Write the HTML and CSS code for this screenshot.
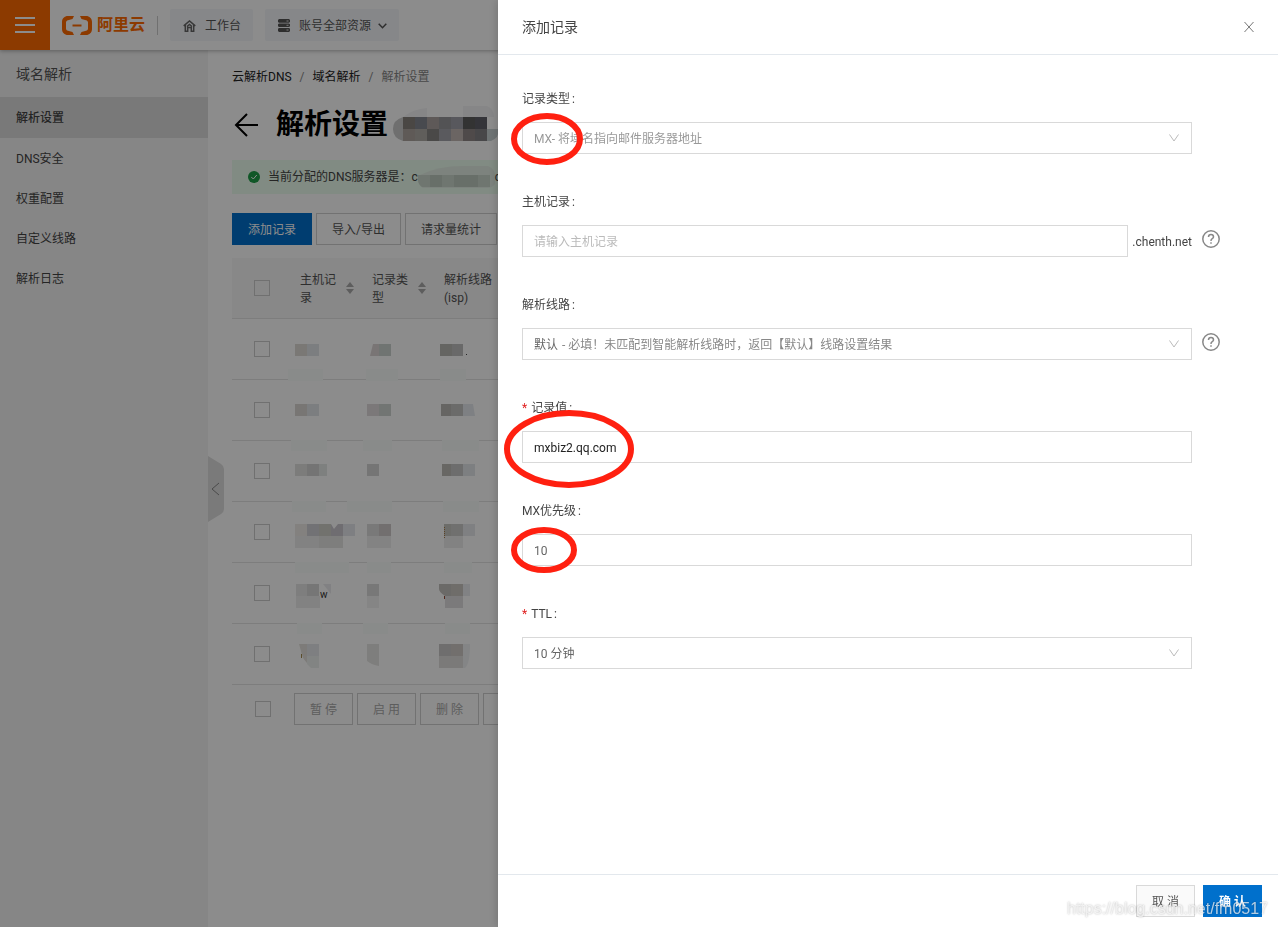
FILE: index.html
```html
<!DOCTYPE html>
<html lang="zh-CN">
<head>
  <meta charset="UTF-8">
  <meta name="viewport" content="width=device-width, initial-scale=1.0">
  <title>云解析DNS - 解析设置</title>
  <link rel="stylesheet" href="styles.css">
</head>
<body>
  <header class="topbar">
    <button class="menu-button" aria-label="菜单">
      <svg width="20" height="16" viewBox="0 0 20 16" stroke="#fff" stroke-width="2"><path d="M0 1H20M0 8H20M0 15H20"/></svg>
    </button>
    <a class="logo" href="#">
      <svg width="30" height="19" viewBox="0 0 30 19" fill="#ff6a00">
        <path d="M12 0H6C2.500 0 0 2.500 0 6v7c0 3.500 2.500 6 6 6h6l-1.500-3-4.500-1.200C4.700 14.400 4 13.600 4 12.500v-6C4 5.400 4.700 4.600 6 4.200L10.500 3z"/>
        <path d="M18 0h6c3.500 0 6 2.500 6 6v7c0 3.500-2.500 6-6 6h-6l1.500-3 4.500-1.200c1.300-.4 2-1.200 2-2.300v-6c0-1.100-.7-1.900-2-2.300L19.500 3z"/>
        <path d="M10.500 8.500h9v2h-9z"/>
      </svg>
      <span>阿里云</span>
    </a>
    <button class="top-button">
      <svg width="13" height="12" viewBox="0 0 13 12" fill="none" stroke="#666" stroke-width="1.500"><path d="M.7 5.800L6.500 1l5.800 4.800M2.300 5v6.200h2.400V7.500h3.600v3.700h2.400V5M4 6.500L6.500 4.400 9 6.500"/></svg>
      工作台
    </button>
    <button class="top-button">
      <svg width="12" height="13" viewBox="0 0 12 13"><path fill="#555" d="M1 0h10l1 1v2l-1 .7H1L0 3V1zM1 4.500h10l1 .7v2l-1 .8H1l-1-.8v-2zM1 9h10l1 .8V12l-1 1H1l-1-1V9.800z"/><path stroke="#ddd" d="M8.500 2h2M8.500 6.300h2M8.500 11h2"/></svg>
      <span>账号全部资源</span>
      <svg class="arrow" width="9" height="6" viewBox="0 0 9 6" fill="none" stroke="#555" stroke-width="1.500"><path d="M.7.7l3.800 4L8.300.7"/></svg>
    </button>
  </header>

  <div class="layout">
    <nav class="sidebar">
      <div class="sidebar-title">域名解析</div>
      <a class="active" href="#">解析设置</a>
      <a href="#">DNS安全</a>
      <a href="#">权重配置</a>
      <a href="#">自定义线路</a>
      <a href="#">解析日志</a>
      <button class="collapse" aria-label="收起">
        <svg width="16" height="66" viewBox="0 0 16 66"><path fill="#dedede" d="M0 0l13 8q3 2 3 5v40q0 3-3 5L0 66z"/><path fill="none" stroke="#888" d="M11 27L4 33l7 6"/></svg>
      </button>
    </nav>

    <main class="content">
      <div class="breadcrumb">
        <a href="#">云解析DNS</a><i>/</i><a href="#">域名解析</a><i>/</i><span>解析设置</span>
      </div>
      <h1>
        <svg class="back" width="24" height="24" viewBox="0 0 24 24" fill="none" stroke="#000" stroke-width="2"><path d="M24 12H2M13 1L2 12l11 11"/></svg>
        解析设置
        <svg class="domain" width="106" height="38" viewBox="0 0 106 38">
          <path fill="#f4f4f6" d="M10 11Q20 3 34 2v9zM70 0h24q7 3 7 11H70z"/>
          <path fill="#cacaca" d="M10 11v24Q0 32 0 23T10 11z"/>
          <path fill="#88817c" d="M10 11h12v12H10z"/><path fill="#838791" d="M22 11h12v12H22z"/>
          <path fill="#aba2a0" d="M34 11h12v12H34z"/><path fill="#97979b" d="M46 11h12v12H46z"/>
          <path fill="#a0a0a9" d="M58 11h12v12H58z"/><path fill="#5d5d5d" d="M70 11h12v12H70z"/>
          <path fill="#606069" d="M82 11h12v12H82z"/><path fill="#ada49f" d="M10 23h12v12H10z"/>
          <path fill="#afaba7" d="M22 23h12v12H22z"/><path fill="#888583" d="M34 23h12v12H34z"/>
          <path fill="#a4a4ab" d="M46 23h12v12H46z"/><path fill="#c3b9b4" d="M58 23h12v12H58z"/>
          <path fill="#908888" d="M70 23h12v12H70z"/><path fill="#838185" d="M82 23h12v12H82z"/>
          <path fill="#cad3d5" d="M94 23h12q0 9-8 12h-4z"/>
        </svg>
      </h1>
      <div class="notice">
        <svg width="12" height="12" viewBox="0 0 12 12"><circle cx="6" cy="6" r="6" fill="#1e9e48"/><path fill="none" stroke="#fff" d="M3.300 6l2 2 3.500-4"/></svg>
        <span>当前分配的DNS服务器是：c</span>
        <svg width="77" height="24" viewBox="0 0 77 24"><path fill="#e3efe5" d="M2 10Q20 1 45 1h25q7 3 7 10v8q-3 4-8 4H5q-5-3-5-8z"/><path fill="#cad8cc" d="M0 10h72v12H4q-4-3-4-7z"/><path fill="#becbc0" d="M12 10h12v12H12zM36 10h24v12H36z"/></svg>
        <span>c</span>
      </div>
      <div class="toolbar">
        <button class="btn primary">添加记录</button>
        <button class="btn">导入/导出</button>
        <button class="btn">请求量统计</button>
      </div>

      <table class="records">
        <thead>
          <tr>
            <th class="check"><input type="checkbox" aria-label="全选"></th>
            <th class="col"><div class="sortable"><span>主机记录</span><svg width="8" height="12" viewBox="0 0 8 12" fill="#aaa"><path d="M4 0l4 5H0zM4 12l4-5H0z"/></svg></div></th>
            <th class="col"><div class="sortable"><span>记录类型</span><svg width="8" height="12" viewBox="0 0 8 12" fill="#aaa"><path d="M4 0l4 5H0zM4 12l4-5H0z"/></svg></div></th>
            <th><div class="isp">解析线路(isp)</div></th>
          </tr>
        </thead>
        <tbody>
          <tr>
            <td class="check"><input type="checkbox" aria-label="选择记录"></td>
            <td><svg class="value" viewBox="0 0 72 60"><path fill="#dfdad5" d="M7 25h12v12H7z"/><path fill="#e2e5ea" d="M19 25h12v12H19z"/><path fill="#fafdfb" d="M0 50h35v12H0z"/></svg></td>
            <td><svg class="value" viewBox="0 0 72 60"><path fill="#dcd5d5" d="M13 25h6v12h-9z"/><path fill="#cdd3d0" d="M19 25h12v12H19z"/><path fill="#fafdfb" d="M6 50h32v12H6z"/></svg></td>
            <td><svg class="value" viewBox="0 0 72 60"><path fill="#b9b8b3" d="M8 25h12v12H8z"/><path fill="#bfbfbf" d="M20 25h11v12H20z"/><path fill="#444" d="M34 35h1v1h-1z"/><path fill="#fafdfb" d="M8 50h26v12H8z"/></svg></td>
          </tr>
          <tr>
            <td class="check"><input type="checkbox" aria-label="选择记录"></td>
            <td><svg class="value" viewBox="0 0 72 60"><path fill="#dad8d3" d="M7 24h12v12H7z"/><path fill="#e2e5e9" d="M19 24h12v12H19z"/><path fill="#fafdfb" d="M3 60h36v11H3z"/></svg></td>
            <td><svg class="value" viewBox="0 0 72 60"><path fill="#e0dbdd" d="M7 24h12v12H7z"/><path fill="#cfd5d2" d="M19 24h12v12H19z"/><path fill="#fafdfb" d="M3 60h29v11H3z"/></svg></td>
            <td><svg class="value" viewBox="0 0 72 60"><path fill="#bbb9b5" d="M9 24h10v12H9z"/><path fill="#c3c3c2" d="M19 24h12v12H19z"/><path fill="#e6e9ee" d="M31 24h10l2 12H31z"/><path fill="#fafdfb" d="M10 60h37v11H10z"/></svg></td>
          </tr>
          <tr>
            <td class="check"><input type="checkbox" aria-label="选择记录"></td>
            <td><svg class="value" viewBox="0 0 72 60"><path fill="#e2e2e1" d="M7 23h12v12H7z"/><path fill="#d4d4d3" d="M19 23h12v12H19z"/><path fill="#e5eae7" d="M31 23h8v12h-8z"/><path fill="#fafdfb" d="M4 60h34v11H4z"/></svg></td>
            <td><svg class="value" viewBox="0 0 72 60"><path fill="#d6d6d6" d="M7 23h12v12H7z"/><path fill="#fafdfb" d="M-13 60h45v11h-45z"/></svg></td>
            <td><svg class="value" viewBox="0 0 72 60"><path fill="#bdbcb7" d="M10 23h9v12h-9z"/><path fill="#c6c6c6" d="M19 23h12v12H19z"/><path fill="#e4e7ec" d="M31 23h12v12H31z"/><path fill="#fafdfb" d="M11 60h36v11H11z"/></svg></td>
          </tr>
          <tr>
            <td class="check"><input type="checkbox" aria-label="选择记录"></td>
            <td><svg class="value" viewBox="0 0 72 60"><path fill="#efece8" d="M7 22h12v12H7z"/><path fill="#cfcfd5" d="M19 22h12v12H19z"/><path fill="#cfcfc9" d="M31 22h12v12H31z"/><path fill="#cac6ce" d="M43 22l3 5 4-5h5v12H43z"/><path fill="#e6e8ed" d="M55 22h12v12H55z"/><path fill="#ededed" d="M7 34h24v12H7z"/><path fill="#e5e5e4" d="M31 34h24v12H31z"/><path fill="#fafdfb" d="M7 60h54v11H7z"/></svg></td>
            <td><svg class="value" viewBox="0 0 72 60"><path fill="#ddd" d="M7 22h12v12H7z"/><path fill="#cfcacb" d="M19 22h12v12H19z"/><path fill="#eee" d="M7 34h24v12H7z"/><path fill="#fafdfb" d="M7 60h24v11H7z"/></svg></td>
            <td><svg class="value" viewBox="0 0 72 60"><path fill="#c7c6c1" d="M12 22h7v12h-7z"/><path fill="#cccccb" d="M19 22h12v12H19z"/><path fill="#e7e9ed" d="M31 22h12v12H31z"/><path fill="#ededed" d="M12 34h19v12H12z"/><path stroke="#a77b48" stroke-dasharray="1 1" d="M12.500 25v12"/><path fill="#fafdfb" d="M12 60h28v11H12z"/></svg></td>
          </tr>
          <tr>
            <td class="check"><input type="checkbox" aria-label="选择记录"></td>
            <td><svg class="value" viewBox="0 0 72 60"><path fill="#e5e5e5" d="M8 21h11v12H8z"/><path fill="#d8d8d8" d="M19 21h12v12H19z"/><path fill="#ededed" d="M8 33h24v12H8z"/><path fill="#ececee" d="M35 21h8v10z"/><text x="32" y="35" font-size="10" fill="#333">w</text><path fill="#fafdfb" d="M9 60h25v11H9z"/></svg></td>
            <td><svg class="value" viewBox="0 0 72 60"><path fill="#dadada" d="M7 21h12v12H7z"/><path fill="#f2f2f2" d="M7 33h12v12H7z"/><path fill="#fafdfb" d="M3 60h25v11H3z"/></svg></td>
            <td><svg class="value" viewBox="0 0 72 60"><path fill="#c4c1bd" d="M7 21h12v12h-6q-6-4-6-7z"/><path fill="#cac6c2" d="M19 21h12v12H19z"/><path fill="#ebedf0" d="M31 21h7v12h-7z"/><path fill="#e0dfe0" d="M13 33h18v12H13z"/><path stroke="#954b37" d="M12.500 33v3"/><path fill="#fafdfb" d="M13 60h25v11H13z"/></svg></td>
          </tr>
          <tr>
            <td class="check"><input type="checkbox" aria-label="选择记录"></td>
            <td><svg class="value" viewBox="0 0 72 60"><path fill="#e3e1dc" d="M11 20h8v19q-5-5-6-12z"/><path fill="#e6e8ec" d="M19 20h12v12H19z"/><path fill="#edf0ee" d="M19 32h12v12h-8l-4-4z"/><path stroke="#a58b4d" d="M13.500 30v4"/></svg></td>
            <td><svg class="value" viewBox="0 0 72 60"><path fill="#e6e5e3" d="M7 20h12v22q-7-1-12-5z"/></svg></td>
            <td><svg class="value" viewBox="0 0 72 60"><path fill="#cac9c9" d="M7 20h12v12H7z"/><path fill="#d0cbc6" d="M19 20h12v12H19z"/><path fill="#e0dedd" d="M7 32h24v12H7z"/><path fill="#f1f3f5" d="M31 20h7q0 20-5 24h-2z"/></svg></td>
          </tr>
        </tbody>
      </table>
      <div class="batch">
        <input type="checkbox" aria-label="全选记录">
        <button class="btn" disabled>暂 停</button>
        <button class="btn" disabled>启 用</button>
        <button class="btn" disabled>删 除</button>
        <button class="btn" disabled>更多</button>
      </div>
    </main>
  </div>

  <div class="mask"></div>

  <section class="drawer" role="dialog" aria-labelledby="drawer-title">
    <header class="drawer-header">
      <h2 id="drawer-title">添加记录</h2>
      <button class="close" aria-label="关闭">
        <svg width="10" height="10" viewBox="0 0 10 10" stroke="#777"><path d="M.5 0l9 10M9.500 0l-9 10"/></svg>
      </button>
    </header>

    <form class="drawer-body">
      <div class="field">
        <label for="type">记录类型<span class="colon">:</span></label>
        <div class="control select">
          <select id="type" disabled><option>MX- 将域名指向邮件服务器地址</option></select>
          <svg width="10" height="8" viewBox="0 0 10 8" fill="none" stroke="#bbb"><path d="M.5.5l4.500 6.500L9.500.5"/></svg>
        </div>
      </div>
      <div class="field">
        <label for="host">主机记录<span class="colon">:</span></label>
        <div class="control with-suffix">
          <input type="text" id="host" placeholder="请输入主机记录">
          <span>.chenth.net</span>
        </div>
        <button type="button" class="help" aria-label="帮助">
          <svg width="18" height="18" viewBox="0 0 18 18" fill="none" stroke="#888" stroke-width="1.500"><circle cx="9" cy="9" r="8.200"/><path d="M6.500 7q0-2.500 2.500-2.500T11.500 7Q11.500 8 10 8.900 9 9.500 9 11M9 12.200v1.500"/></svg>
        </button>
      </div>
      <div class="field">
        <label for="line">解析线路<span class="colon">:</span></label>
        <div class="control select">
          <select id="line"><option>默认</option></select>
          <span class="hint">- 必填！未匹配到智能解析线路时，返回【默认】线路设置结果</span>
          <svg width="10" height="8" viewBox="0 0 10 8" fill="none" stroke="#bbb"><path d="M.5.5l4.500 6.500L9.500.5"/></svg>
        </div>
        <button type="button" class="help" aria-label="帮助">
          <svg width="18" height="18" viewBox="0 0 18 18" fill="none" stroke="#888" stroke-width="1.500"><circle cx="9" cy="9" r="8.200"/><path d="M6.500 7q0-2.500 2.500-2.500T11.500 7Q11.500 8 10 8.900 9 9.500 9 11M9 12.200v1.500"/></svg>
        </button>
      </div>
      <div class="field">
        <label for="value" class="required">记录值<span class="colon">:</span></label>
        <div class="control"><input type="text" id="value" class="filled" value="mxbiz2.qq.com"></div>
      </div>
      <div class="field">
        <label for="priority">MX优先级<span class="colon">:</span></label>
        <div class="control"><input type="text" id="priority" value="10"></div>
      </div>
      <div class="field">
        <label for="ttl" class="required">TTL<span class="colon">:</span></label>
        <div class="control select">
          <select id="ttl"><option>10 分钟</option></select>
          <svg width="10" height="8" viewBox="0 0 10 8" fill="none" stroke="#bbb"><path d="M.5.5l4.500 6.500L9.500.5"/></svg>
        </div>
      </div>
    </form>

    <footer class="drawer-footer">
      <button class="btn">取 消</button>
      <button class="btn primary confirm">确 认</button>
    </footer>

    <!-- hand-drawn marks over the fields to fill in -->
    <svg class="marks" width="160" height="600" viewBox="0 0 160 600" fill="none" stroke="#ff2010" stroke-width="6">
      <ellipse cx="49" cy="139" rx="33" ry="23"/>
      <ellipse cx="71" cy="449" rx="62" ry="36"/>
      <ellipse cx="46" cy="550" rx="30" ry="20"/>
    </svg>
    <div class="watermark">https://blog.csdn.net/fm0517</div>
  </section>
</body>
</html>
```

FILE: styles.css
```css
* {
  box-sizing: border-box;
}
body {
  margin: 0;
  height: 100vh;
  display: flex;
  flex-direction: column;
  overflow: hidden;
  font-family: Roboto, "Noto Sans CJK SC", sans-serif;
  font-size: 12px;
  line-height: 20px;
  color: #444;
  background: #fff;
}
button, input, select {
  font: inherit;
  color: inherit;
}
button {
  padding: 0;
  border: none;
  background: none;
  cursor: pointer;
}
a {
  color: inherit;
  text-decoration: none;
}
svg {
  flex-shrink: 0;
}

/* top bar */
.topbar {
  position: relative;
  z-index: 1;
  flex-shrink: 0;
  display: flex;
  align-items: center;
  height: 50px;
  background: #fff;
  box-shadow: 0 1px 4px rgba(0, 0, 0, 0.3);
}
.menu-button {
  display: flex;
  align-items: center;
  justify-content: center;
  width: 50px;
  height: 50px;
  background: #ff6a00;
}
.logo {
  display: flex;
  align-items: center;
  gap: 5px;
  margin-left: 12px;
  padding-right: 12px;
  border-right: 1px solid #ccc;
  font-size: 16px;
  font-weight: bold;
  line-height: 18px;
  color: #ff6a00;
}
.top-button {
  display: flex;
  align-items: center;
  gap: 9px;
  height: 32px;
  margin-left: 12px;
  padding: 1px 12px 0 13px;
  border-radius: 2px;
  background: #f4f6fa;
  color: #555;
}
.top-button .arrow {
  margin-left: -2px;
}

.layout {
  flex: 1;
  display: flex;
  min-height: 0;
}

/* sidebar */
.sidebar {
  position: relative;
  width: 208px;
  flex-shrink: 0;
  background: #f4f4f4;
}
.sidebar-title {
  padding: 1px 16px 0;
  font-size: 14px;
  line-height: 46px;
  color: #555;
}
.sidebar a {
  display: block;
  padding: 2px 16px 0;
  line-height: 38px;
}
.sidebar a.active {
  padding-bottom: 1px;
  background: #dcdcdc;
  font-weight: 500;
}
.collapse {
  position: absolute;
  left: 100%;
  top: 406px;
  line-height: 0;
}

/* content */
.content {
  flex: 1;
  min-width: 0;
  padding: 17px 24px;
}
.breadcrumb i {
  margin: 0 8px;
  font-style: normal;
  color: #888;
}
.breadcrumb a {
  color: #222;
}
.breadcrumb span {
  color: #888;
}
h1 {
  display: flex;
  align-items: center;
  margin: 18px 0 0;
  font-size: 28px;
  font-weight: bold;
  line-height: 40px;
  color: #000;
}
h1 .back {
  margin: 0 18px 0 2px;
}
h1 .domain {
  margin-left: 5px;
}
.notice {
  display: flex;
  align-items: center;
  height: 34px;
  margin-top: 15px;
  padding: 0 16px;
  background: #ebfdee;
}
.notice span:first-of-type {
  margin-left: 8px;
}
.toolbar {
  display: flex;
  gap: 4px;
  margin-top: 19px;
}
.btn {
  height: 32px;
  padding: 2px 15px 0;
  border: 1px solid #d9d9d9;
  background: #fafafa;
  color: #555;
  white-space: nowrap;
}
.btn.primary {
  border-color: #0070cc;
  background: #0070cc;
  color: #fff;
}
.content .btn:not(.primary) {
  border-color: #d0d0d0;
  background: transparent;
}
.content .btn:disabled {
  color: #aaa;
}
input[type="checkbox"] {
  appearance: none;
  display: block;
  width: 16px;
  height: 16px;
  margin: 0;
  border: 1px solid #ccc;
}

/* records table */
.records {
  width: 100%;
  margin-top: 13px;
  border-collapse: separate;
  border-spacing: 0;
  table-layout: fixed;
}
.records th, .records td {
  height: 61px;
  padding: 0;
  border-bottom: 1px solid #e3e3e3;
  text-align: left;
  font-weight: normal;
}
.records th {
  background: #f7f7f7;
  line-height: 18px;
  color: #555;
}
.records .check {
  width: 56px;
  padding-left: 22px;
}
.records .col {
  width: 72px;
}
.sortable {
  display: flex;
  align-items: center;
  gap: 10px;
  padding-left: 12px;
}
.sortable span {
  width: 36px;
  padding-top: 2px;
}
.isp {
  width: 60px;
  padding: 2px 0 0 12px;
}
.value {
  display: block;
  width: 72px;
  height: 60px;
  overflow: visible;
}
.batch {
  display: flex;
  align-items: center;
  gap: 4px;
  padding: 8px 0 8px 23px;
}
.batch input {
  margin-right: 19px;
}

.mask {
  position: fixed;
  inset: 0;
  z-index: 2;
  background: rgba(0, 0, 0, 0.45);
}

/* drawer */
.drawer {
  position: fixed;
  top: 0;
  right: 0;
  bottom: 0;
  z-index: 3;
  display: flex;
  flex-direction: column;
  width: 780px;
  max-width: 100%;
  background: #fff;
  box-shadow: -2px 0 8px rgba(0, 0, 0, 0.15);
}
.drawer-header {
  display: flex;
  align-items: center;
  justify-content: space-between;
  height: 55px;
  padding: 0 24px;
  border-bottom: 1px solid #e3e8ed;
}
.drawer-header h2 {
  margin: 0;
  font-size: 14px;
  font-weight: normal;
}
.close {
  display: flex;
  padding: 4px 0 4px 4px;
}
.drawer-body {
  flex: 1;
  padding: 34px 24px 0;
  overflow: hidden;
}
.field {
  display: grid;
  grid-template-columns: 1fr 62px;
  row-gap: 13px;
  margin-bottom: 38px;
}
.field label {
  grid-column: 1 / 3;
}
.colon {
  margin-left: 2px;
}
.required::before {
  content: "*";
  margin-right: 4px;
  color: #e02020;
}
.control {
  position: relative;
}
.control input, .control select {
  display: block;
  appearance: none;
  width: 100%;
  height: 32px;
  padding: 2px 11px 0;
  border: 1px solid #d9d9d9;
  border-radius: 0;
  background: #fff;
  color: #666;
  opacity: 1;
}
.control input.filled {
  color: #222;
}
.control select:disabled {
  color: #999;
}
.control input::placeholder {
  color: #bbb;
}
.select svg {
  position: absolute;
  right: 13px;
  top: 12px;
  pointer-events: none;
}
.select .hint {
  position: absolute;
  left: 40px;
  top: 7px;
  color: #888;
  pointer-events: none;
}
.with-suffix {
  display: flex;
  align-items: center;
  gap: 4px;
}
.with-suffix input {
  flex: 1;
  min-width: 0;
}
.with-suffix span {
  padding-top: 2px;
}
.help {
  display: flex;
  align-items: center;
  padding: 0 10px 4px;
}
.drawer-footer {
  display: flex;
  justify-content: flex-end;
  gap: 8px;
  padding: 10px 16px;
  border-top: 1px solid #e3e8ed;
}
.confirm {
  font-weight: bold;
}
.marks {
  position: absolute;
  left: 0;
  top: 0;
  pointer-events: none;
}
.watermark {
  position: absolute;
  right: 10px;
  bottom: 8px;
  font-family: "Liberation Sans", sans-serif;
  font-size: 16px;
  color: rgba(255, 255, 255, 0.7);
  text-shadow: 0 0 2px rgba(0, 0, 0, 0.3);
  pointer-events: none;
}
```
